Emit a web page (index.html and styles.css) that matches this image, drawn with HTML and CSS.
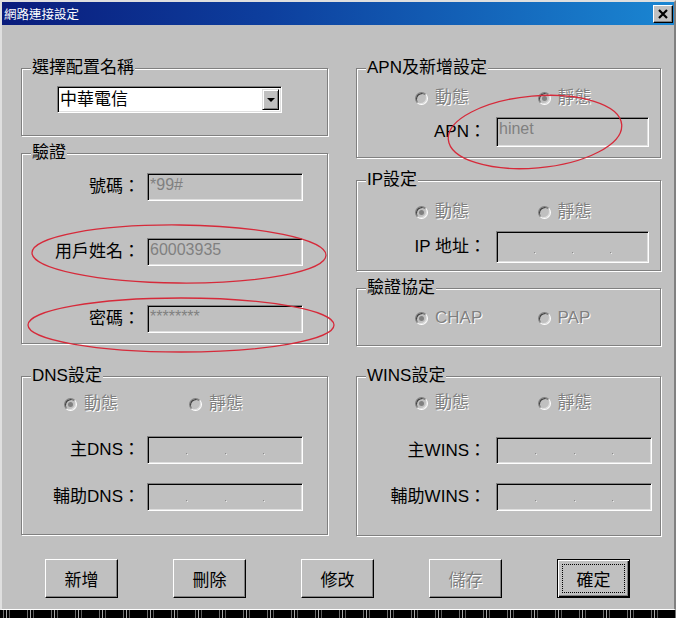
FILE: index.html
```html
<!DOCTYPE html>
<html lang="zh-Hant">
<head>
<meta charset="utf-8">
<title>網路連接設定</title>
<link rel="stylesheet" href="styles.css">
</head>
<body>
<div class="window">
  <div class="titlebar">
    <span class="title">網路連接設定</span>
    <span class="close"><svg width="18" height="16" viewBox="0 0 18 16"><path d="M5 4 L13 12 M13 4 L5 12" stroke="#000" stroke-width="2.2" fill="none"/></svg></span>
  </div>
  <div class="content">
    <div class="col">
      <fieldset class="group g-profile">
        <legend>選擇配置名稱</legend>
        <div class="combo"><span class="combo-text">中華電信</span><span class="combo-btn"><span class="arrow"></span></span></div>
      </fieldset>
      <fieldset class="group g-auth">
        <legend>驗證</legend>
        <div class="row r1"><span class="lbl">號碼：</span><span class="fld">*99#</span></div>
        <div class="row r2"><span class="lbl">用戶姓名：</span><span class="fld">60003935</span></div>
        <div class="row r3"><span class="lbl">密碼：</span><span class="fld">********</span></div>
      </fieldset>
    </div>
    <div class="col right">
      <fieldset class="group g-apn">
        <legend>APN及新增設定</legend>
        <div class="radios"><span class="radio"><span class="rb"></span>動態</span><span class="radio"><span class="rb on"></span>靜態</span></div>
        <div class="row"><span class="lbl">APN：</span><span class="fld h30">hinet</span></div>
      </fieldset>
      <fieldset class="group g-ip">
        <legend>IP設定</legend>
        <div class="radios"><span class="radio"><span class="rb on"></span>動態</span><span class="radio"><span class="rb"></span>靜態</span></div>
        <div class="row"><span class="lbl">IP 地址：</span><span class="fld ip h32"><i class="dot"></i><i class="dot"></i><i class="dot"></i></span></div>
      </fieldset>
      <fieldset class="group g-proto">
        <legend>驗證協定</legend>
        <div class="radios"><span class="radio"><span class="rb on"></span>CHAP</span><span class="radio"><span class="rb"></span>PAP</span></div>
      </fieldset>
    </div>
    <fieldset class="group g-dns">
      <legend>DNS設定</legend>
      <div class="radios"><span class="radio"><span class="rb on"></span>動態</span><span class="radio"><span class="rb"></span>靜態</span></div>
      <div class="row r1"><span class="lbl">主DNS：</span><span class="fld ip"><i class="dot"></i><i class="dot"></i><i class="dot"></i></span></div>
      <div class="row r2"><span class="lbl">輔助DNS：</span><span class="fld ip"><i class="dot"></i><i class="dot"></i><i class="dot"></i></span></div>
    </fieldset>
    <fieldset class="group g-wins right">
      <legend>WINS設定</legend>
      <div class="radios"><span class="radio"><span class="rb on"></span>動態</span><span class="radio"><span class="rb"></span>靜態</span></div>
      <div class="row r1"><span class="lbl">主WINS：</span><span class="fld ip h27"><i class="dot"></i><i class="dot"></i><i class="dot"></i></span></div>
      <div class="row r2"><span class="lbl">輔助WINS：</span><span class="fld ip"><i class="dot"></i><i class="dot"></i><i class="dot"></i></span></div>
    </fieldset>
    <div class="buttons">
      <button class="btn">新增</button>
      <button class="btn">刪除</button>
      <button class="btn">修改</button>
      <button class="btn disabled">儲存</button>
      <button class="btn default"><span class="focus">確定</span></button>
    </div>
  </div>
</div>
<div class="strip"></div>
<svg class="marks" width="676" height="618" viewBox="0 0 676 618">
  <g fill="none" stroke="#d62a3a" stroke-width="1.3">
    <ellipse cx="535" cy="132" rx="87" ry="36" transform="rotate(-5 535 132)"/>
    <ellipse cx="179" cy="254" rx="147" ry="29" transform="rotate(0.5 179 254)"/>
    <ellipse cx="181" cy="325" rx="153" ry="27"/>
  </g>
</svg>
</body>
</html>
```
FILE: styles.css
```css
* { box-sizing: border-box; }

body {
  margin: 0;
  width: 676px;
  height: 618px;
  overflow: hidden;
  position: relative;
  background: #000;
  font-family: "Liberation Sans", "Noto Sans CJK TC", sans-serif;
  font-size: 17px;
  color: #000;
}

.window {
  height: 610px;
  background: #c0c0c0;
  border-style: solid;
  border-width: 2px 2px 1px 2px;
  border-color: #dfdfdf #808080 #ffffff #dfdfdf;
}

.titlebar {
  height: 23px;
  display: flex;
  align-items: center;
  justify-content: space-between;
  padding: 0 1px 0 2px;
  background: linear-gradient(90deg, #0a1c7c 0%, #0d3f9e 40%, #1a86d2 100%);
}

.title {
  color: #fff;
  font-family: "Noto Sans CJK TC", sans-serif;
  font-size: 12.5px;
  line-height: 14px;
}

.close {
  width: 20px;
  height: 18px;
  background: #c0c0c0;
  border: 1px solid;
  border-color: #fff #000 #000 #fff;
  box-shadow: inset -1px -1px 0 #808080;
  display: flex;
  align-items: center;
  justify-content: center;
}

.content {
  display: grid;
  grid-template-columns: 307px 305px;
  column-gap: 28px;
  row-gap: 20px;
  padding: 33px 0 0 19px;
  align-items: start;
}

.col { display: flex; flex-direction: column; }

.group {
  margin: 0;
  padding: 0;
  min-width: 0;
  border: 1px solid #808080;
  box-shadow: 1px 1px 0 #fff, inset 1px 1px 0 #fff;
}

.group legend {
  margin-left: 9px;
  padding: 0 1px;
  height: 20px;
  line-height: 20px;
  background: #c0c0c0;
}

.g-profile { height: 78px; }
.g-auth { height: 201px; margin-top: 7px; }
.g-apn { height: 100px; }
.g-ip { height: 101px; margin-top: 12px; }
.g-proto { height: 68px; margin-top: 7px; }
.g-dns { height: 169px; }
.g-wins { height: 170px; }

/* combo */
.combo {
  margin: 8px 0 0 35px;
  width: 225px;
  height: 27px;
  background: #fff;
  border: 1px solid;
  border-color: #808080 #fff #fff #808080;
  box-shadow: inset 1px 1px 0 #000, inset -1px -1px 0 #dfdfdf;
  display: flex;
  align-items: center;
  justify-content: space-between;
  padding: 0 2px 0 2px;
}
.combo-text { line-height: 20px; }
.combo-btn {
  width: 17px;
  height: 21px;
  background: #c0c0c0;
  border: 1px solid;
  border-color: #dfdfdf #000 #000 #dfdfdf;
  box-shadow: inset 1px 1px 0 #fff, inset -1px -1px 0 #808080;
  display: flex;
  align-items: center;
  justify-content: center;
}
.arrow {
  width: 0;
  height: 0;
  border-left: 4px solid transparent;
  border-right: 4px solid transparent;
  border-top: 4px solid #000;
}

/* rows */
.row { display: flex; align-items: center; }
.lbl {
  width: 118px;
  margin-right: 7px;
  text-align: right;
  line-height: 20px;
  white-space: nowrap;
}
.right .lbl { width: 129px; margin-right: 10px; }

.fld {
  width: 156px;
  height: 28px;
  border: 1px solid;
  border-color: #808080 #fff #fff #808080;
  box-shadow: inset 1px 1px 0 #000, inset -1px -1px 0 #dfdfdf;
  font-size: 16px;
  line-height: 18px;
  color: #808080;
  padding: 2px 0 0 2px;
}
.right .fld { width: 153px; }
.g-wins .fld { width: 156px; }
.fld.h30 { height: 30px; }
.fld.h32 { height: 32px; }
.fld.h27 { height: 27px; }

.ip {
  display: flex;
  justify-content: space-evenly;
  align-items: flex-end;
  padding: 0 0 9px 0;
}
.dot {
  display: block;
  width: 1px;
  height: 1px;
  background: #8c8c8c;
  box-shadow: 1px 1px 0 #ececec;
}

.g-auth .r1 { margin-top: 10px; }
.g-auth .r2 { margin-top: 37px; }
.g-auth .r3 { margin-top: 39px; }

.g-apn .radios { margin-top: 10px; }
.g-apn .row { margin-top: 9px; }
.g-ip .radios { margin-top: 12px; }
.g-ip .row { margin-top: 9px; }
.g-proto .radios { margin-top: 10px; }
.g-dns .radios { margin-top: 8px; }
.g-dns .r1 { margin-top: 22px; }
.g-dns .r2 { margin-top: 19px; }
.g-wins .radios { margin-top: 7px; }
.g-wins .r1 { margin-top: 24px; }
.g-wins .r2 { margin-top: 19px; }

/* radios */
.radios {
  display: flex;
  height: 20px;
  align-items: center;
  padding-left: 42px;
}
.right .radios { padding-left: 58px; }
.radio {
  display: flex;
  align-items: center;
  gap: 7px;
  width: 125px;
  color: #808080;
  text-shadow: 1px 1px 0 #fff;
  line-height: 20px;
}
.right .radio { width: 133px; }
.rb {
  flex: none;
  width: 13px;
  height: 13px;
  border-radius: 50%;
  border: 1px solid;
  border-color: #808080 #fff #fff #808080;
  box-shadow: inset 1px 1px 0 #404040, inset -1px -1px 0 #dfdfdf;
  background: #c0c0c0;
  display: flex;
  align-items: center;
  justify-content: center;
}
.rb.on::after {
  content: "";
  width: 5px;
  height: 5px;
  border-radius: 50%;
  background: #808080;
}

/* buttons */
.buttons {
  grid-column: 1 / -1;
  display: flex;
  gap: 55px;
  padding-left: 24px;
  margin-top: 3px;
}
.btn {
  width: 73px;
  height: 39px;
  padding: 0;
  font: inherit;
  color: #000;
  background: #c0c0c0;
  border: 1px solid;
  border-color: #fff #000 #000 #fff;
  box-shadow: inset -1px -1px 0 #808080;
  display: flex;
  align-items: center;
  justify-content: center;
}
.btn.disabled {
  color: #808080;
  text-shadow: 1px 1px 0 #fff;
}
.btn.default {
  border-color: #000;
  box-shadow: inset 1px 1px 0 #fff, inset -1px -1px 0 #000, inset -2px -2px 0 #808080;
  align-items: stretch;
}
.focus {
  flex: 1;
  margin: 4px;
  border: 1px dotted #000;
  display: flex;
  align-items: center;
  justify-content: center;
}

.strip {
  height: 8px;
  background:
    repeating-linear-gradient(90deg, #000 0 3px, #6e6e6e 3px 4px, #000 4px 6px, #a8a8a8 6px 7px, #000 7px 9px, #5a5a5a 9px 10px, #000 10px 24px),
    #000;
}

.marks {
  position: absolute;
  left: 0;
  top: 0;
  pointer-events: none;
}
```
